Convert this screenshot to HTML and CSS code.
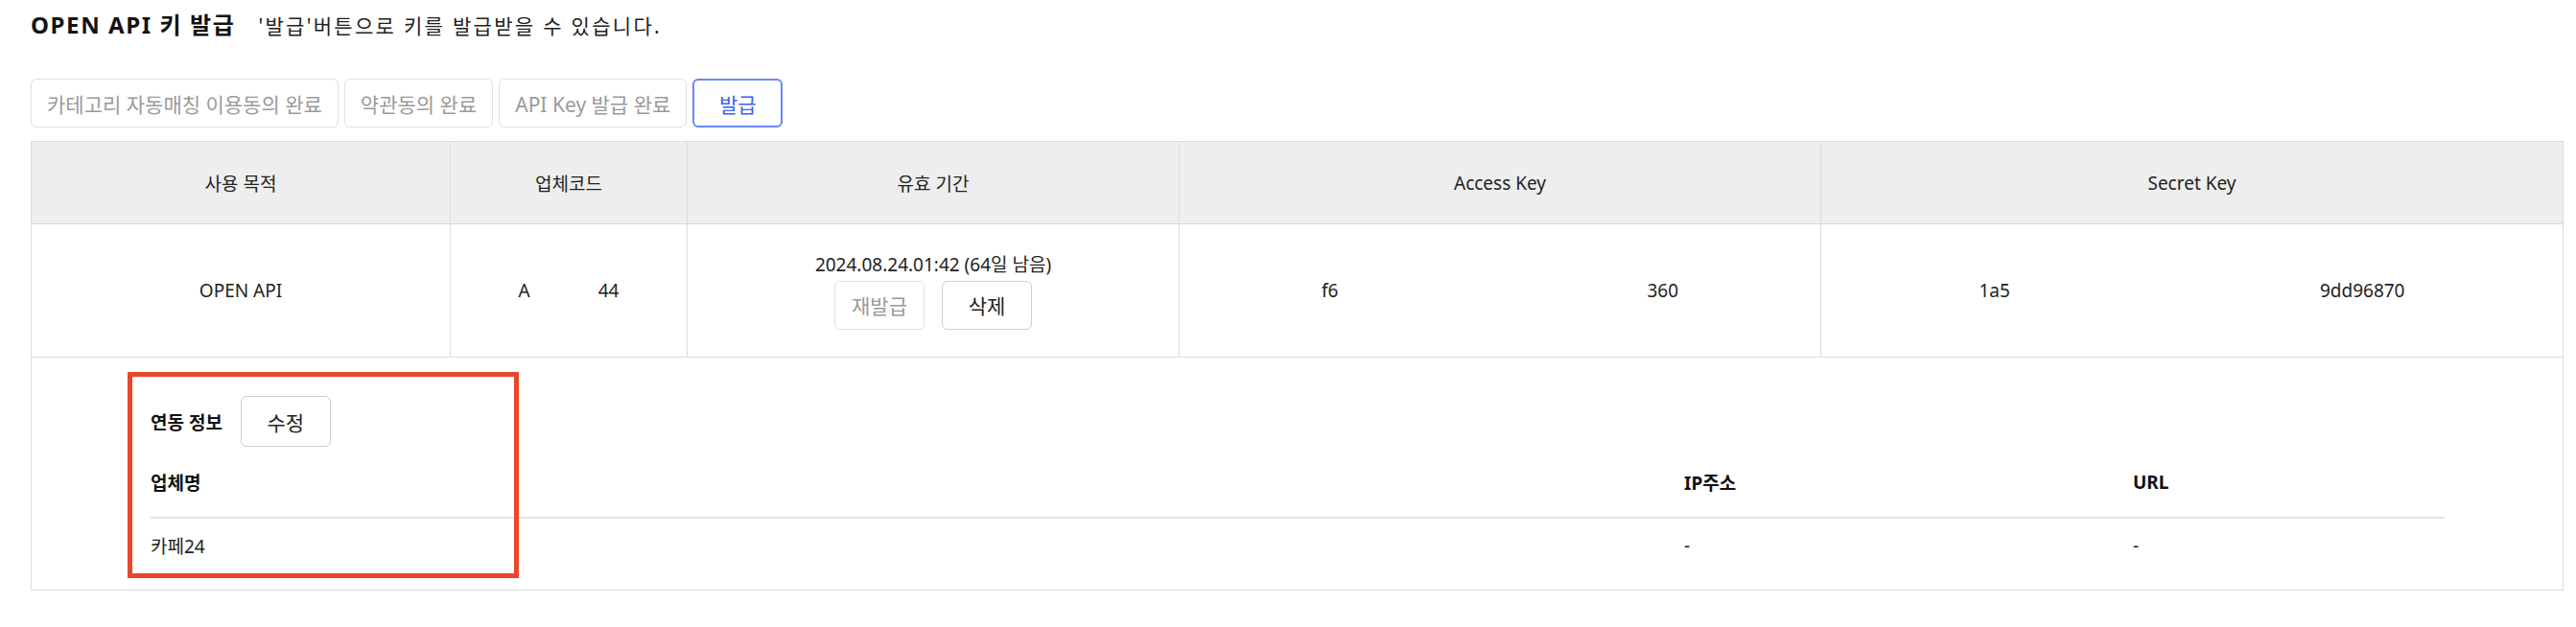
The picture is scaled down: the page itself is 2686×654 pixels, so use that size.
FILE: index.html
```html
<!DOCTYPE html>
<html lang="ko">
<head>
<meta charset="utf-8">
<title>OPEN API 키 발급</title>
<link rel="stylesheet" href="styles.css">
</head>
<body>
<div class="page">
  <div class="head">
    <h2 class="title">OPEN API 키 발급</h2>
    <p class="desc">'발급'버튼으로 키를 발급받을 수 있습니다.</p>
  </div>
  <div class="steps">
    <button class="btn btn-off">카테고리 자동매칭 이용동의 완료</button>
    <button class="btn btn-off">약관동의 완료</button>
    <button class="btn btn-off">API Key 발급 완료</button>
    <button class="btn btn-primary">발급</button>
  </div>
  <div class="keys">
    <div class="th">사용 목적</div>
    <div class="th">업체코드</div>
    <div class="th">유효 기간</div>
    <div class="th">Access Key</div>
    <div class="th last">Secret Key</div>

    <div class="td">OPEN API</div>
    <div class="td"><span>A</span><span class="mask mask-code"></span><span>44</span></div>
    <div class="td td-period">
      <div class="period">2024.08.24.01:42 (64일 남음)</div>
      <div class="cell-btns">
        <button class="btn btn-off btn-sm">재발급</button>
        <button class="btn btn-on btn-sm">삭제</button>
      </div>
    </div>
    <div class="td"><span>f6</span><span class="mask mask-access"></span><span>360</span></div>
    <div class="td last"><span>1a5</span><span class="mask mask-secret"></span><span>9dd96870</span></div>

    <div class="detail">
      <div class="detail-head">
        <strong class="detail-label">연동 정보</strong>
        <button class="btn btn-on btn-sm">수정</button>
      </div>
      <div class="link-table">
        <div class="lh">업체명</div>
        <div class="lh">IP주소</div>
        <div class="lh">URL</div>
        <div class="lv">카페24</div>
        <div class="lv">-</div>
        <div class="lv">-</div>
      </div>
      <div class="annot"></div>
    </div>
  </div>
</div>
</body>
</html>
```
FILE: styles.css
```css
* { box-sizing: border-box; }
html, body { margin: 0; padding: 0; background: #ffffff; }
body {
  font-family: "Noto Sans", "Noto Sans CJK KR", sans-serif;
  color: #222222;
}
.page { padding: 0 13px 0 32px; }

.head {
  display: flex;
  align-items: baseline;
  padding-top: 9px;
  height: 42px;
}
.title {
  margin: 0;
  font-size: 24px;
  line-height: 34px;
  font-weight: 700;
  letter-spacing: 1.6px;
  color: #111111;
}
.desc {
  margin: 0 0 0 24px;
  font-size: 21px;
  line-height: 34px;
  letter-spacing: 2.3px;
  color: #222222;
}

.steps {
  display: flex;
  gap: 6px;
  margin-top: 40px;
}
.btn {
  font-family: inherit;
  font-size: 21px;
  height: 51px;
  min-width: 94px;
  padding: 0 16px;
  background: #ffffff;
  border: 1px solid #dcdcdc;
  border-radius: 6px;
  color: #222222;
  cursor: pointer;
}
.btn-off { color: #9a9a9a; border-color: #e0e0e0; }
.btn-on { color: #222222; border-color: #d0d0d0; }
.btn-primary { color: #3d5ff2; border-color: #6a88f7; border-width: 2px; }
.btn-sm { padding: 0 12px; }

.keys {
  margin-top: 14px;
  display: grid;
  grid-template-columns: 437px 247px 513px 669px 1fr;
  border: 1px solid #dcdcdc;
  font-size: 19px;
}
.th, .td {
  display: flex;
  align-items: center;
  justify-content: center;
  border-right: 1px solid #dcdcdc;
  border-bottom: 1px solid #dcdcdc;
  color: #222222;
}
.th {
  height: 86px;
  background: #eeeeee;
  border-bottom-color: #d6d6d6;
}
.td { height: 139px; }
.th.last, .td.last { border-right: none; }

.td-period { flex-direction: column; gap: 4px; }
.period { line-height: 26px; }
.cell-btns { display: flex; gap: 18px; }

.mask { display: inline-block; }
.mask-code { width: 71px; }
.mask-access { width: 322px; }
.mask-secret { width: 323px; }

.detail {
  grid-column: 1 / -1;
  position: relative;
  padding: 40px 123px 18px 124px;
}
.detail-head {
  display: flex;
  align-items: center;
  gap: 19px;
  height: 53px;
}
.detail-head .btn { height: 53px; }
.detail-label { font-size: 19px; font-weight: 700; color: #111111; }

.link-table {
  display: grid;
  grid-template-columns: 1599px 468px 1fr;
}
.lh {
  height: 75px;
  display: flex;
  align-items: center;
  font-weight: 700;
  color: #111111;
  border-bottom: 2px solid #e2e2e2;
}
.lv {
  height: 56px;
  display: flex;
  align-items: center;
  color: #222222;
}

.annot {
  position: absolute;
  left: 100px;
  top: 15px;
  width: 408px;
  height: 215px;
  border: 5px solid #e9462c;
}
```
